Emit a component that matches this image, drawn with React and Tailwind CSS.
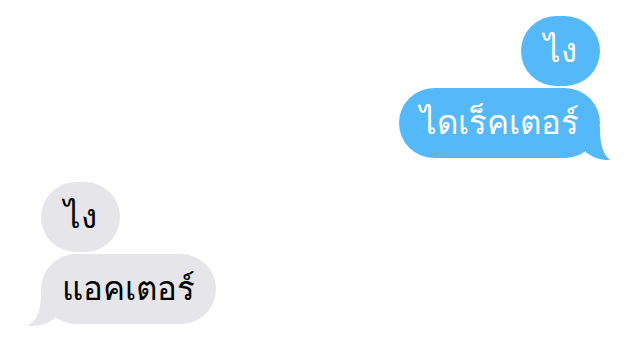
import React from "react";

const font = { fontFamily: '"Noto Sans", "DejaVu Sans", sans-serif' };

const Bubble = ({ text, mine, tail, short }) => (
    <div className="relative">
        <div
            className={`h-[70px] rounded-[35px] flex items-center text-[33px] leading-none ${
                short ? "px-[23px]" : "px-[21px]"
            } ${mine ? "bg-[#55b8f9] text-white" : "bg-[#e5e5ea] text-black"}`}
        >
            <span className="pb-[4px]">{text}</span>
        </div>
        {tail && mine && (
            <svg className="absolute right-[-10px] bottom-[-3px]" width="24" height="34" viewBox="0 0 24 34">
                <path d="M0 0 H14 C14 16 16 26 24 33 C15 33.5 8 31 1 26 L0 26 Z" fill="#55b8f9" />
            </svg>
        )}
        {tail && !mine && (
            <svg className="absolute left-[-13px] bottom-[-3px]" width="27" height="34" viewBox="0 0 27 34">
                <path d="M27 0 H13 C13 16 10 26 0 33 C10 33.5 19 31 26 26 L27 26 Z" fill="#e5e5ea" />
            </svg>
        )}
    </div>
);

export default function App() {
    return (
        <div className="w-[627px] h-[361px] bg-white overflow-hidden pt-[16px]" style={font}>
            <div className="flex flex-col items-end gap-[2px] pr-[27px]">
                <Bubble text="ไง" mine short />
                <Bubble text="ไดเร็คเตอร์" mine tail />
            </div>
            <div className="flex flex-col items-start gap-[2px] pl-[41px] mt-[24px]">
                <Bubble text="ไง" short />
                <Bubble text="แอคเตอร์" tail />
            </div>
        </div>
    );
}
